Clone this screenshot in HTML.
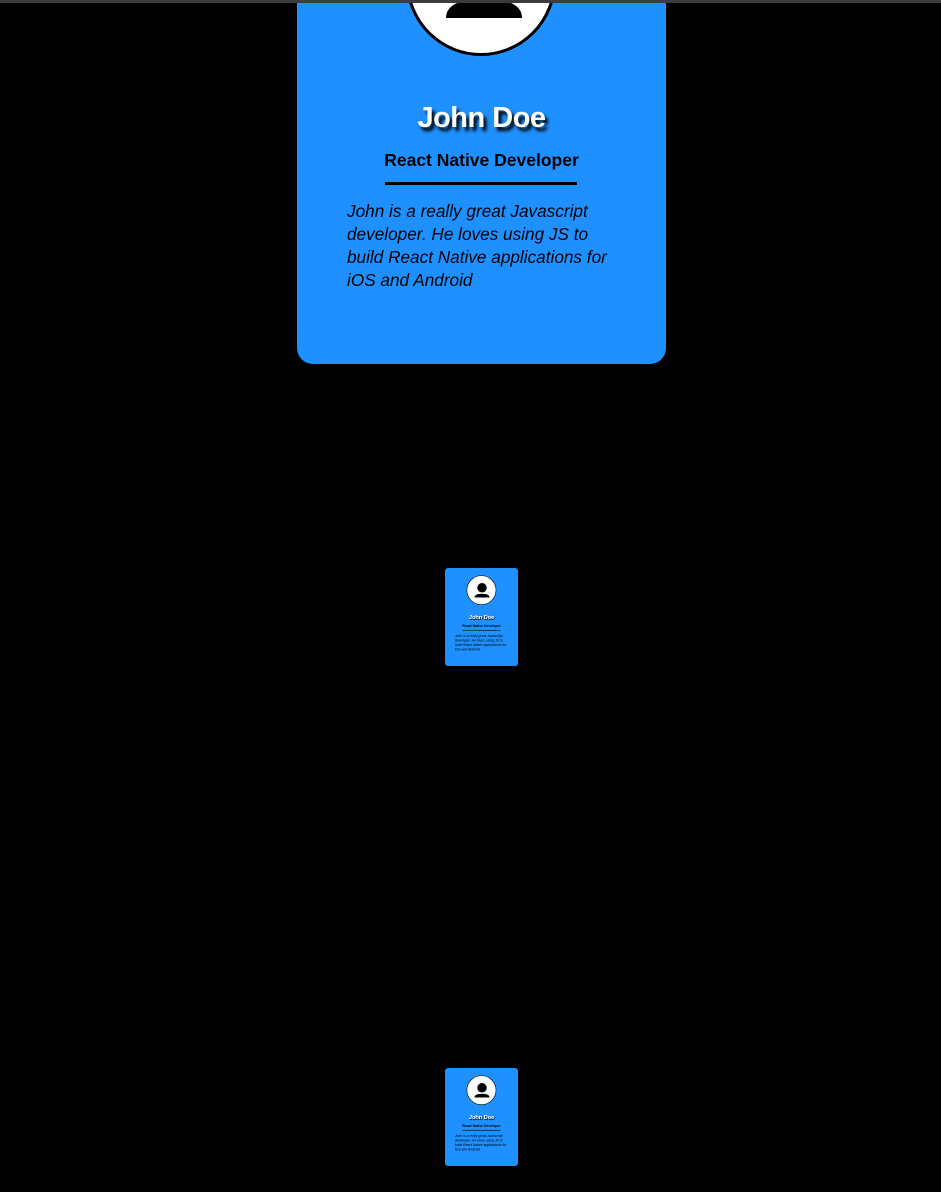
<!DOCTYPE html>
<html><head><style>
html,body{margin:0;padding:0;background:#000;width:941px;height:1192px;overflow:hidden;position:relative}
.bar{position:absolute;left:0;top:0;width:941px;height:3px;background:#3c3c3c;z-index:5}
.card{position:absolute;width:369px;height:495px;background:#1e90ff;border-radius:16px;transform-origin:0 0;font-family:"Liberation Sans",sans-serif}
.av{position:absolute;left:109px;top:37px;width:144px;height:144px;border:3px solid #000;border-radius:50%;background:#fff;overflow:hidden}
.name{position:absolute;left:0;width:369px;top:233px;text-align:center;font-size:29px;font-weight:bold;color:#fff;text-shadow:3px 4px 3px #000;letter-spacing:-0.5px}
.role{position:absolute;left:0;width:369px;top:281px;text-align:center;font-size:17.5px;font-weight:bold;color:#000}
.line{position:absolute;left:88px;top:313px;width:192px;height:3px;background:#000}
.desc{position:absolute;left:50px;top:331px;width:275px;font-size:17.2px;font-style:italic;line-height:23px;color:#000}
</style></head><body>
<div class="bar"></div>
<div class="card" style="left:297px;top:-131px">
 <div class="av"><svg width="144" height="144" viewBox="0 0 144 144"><circle cx="75" cy="60" r="24" fill="#000"/><path d="M37 109 Q37 90 75 90 Q113 90 113 109 Z" fill="#000"/></svg></div>
 <div class="name">John Doe</div><div class="role">React Native Developer</div><div class="line"></div>
 <div class="desc">John is a really great Javascript developer. He loves using JS to build React Native applications for iOS and Android</div>
</div>
<div class="card" style="left:445px;top:568px;transform:scale(0.198)">
 <div class="av"><svg width="144" height="144" viewBox="0 0 144 144"><circle cx="75" cy="60" r="24" fill="#000"/><path d="M37 109 Q37 90 75 90 Q113 90 113 109 Z" fill="#000"/></svg></div>
 <div class="name">John Doe</div><div class="role">React Native Developer</div><div class="line"></div>
 <div class="desc">John is a really great Javascript developer. He loves using JS to build React Native applications for iOS and Android</div>
</div>
<div class="card" style="left:445px;top:1068px;transform:scale(0.198)">
 <div class="av"><svg width="144" height="144" viewBox="0 0 144 144"><circle cx="75" cy="60" r="24" fill="#000"/><path d="M37 109 Q37 90 75 90 Q113 90 113 109 Z" fill="#000"/></svg></div>
 <div class="name">John Doe</div><div class="role">React Native Developer</div><div class="line"></div>
 <div class="desc">John is a really great Javascript developer. He loves using JS to build React Native applications for iOS and Android</div>
</div>
</body></html>
